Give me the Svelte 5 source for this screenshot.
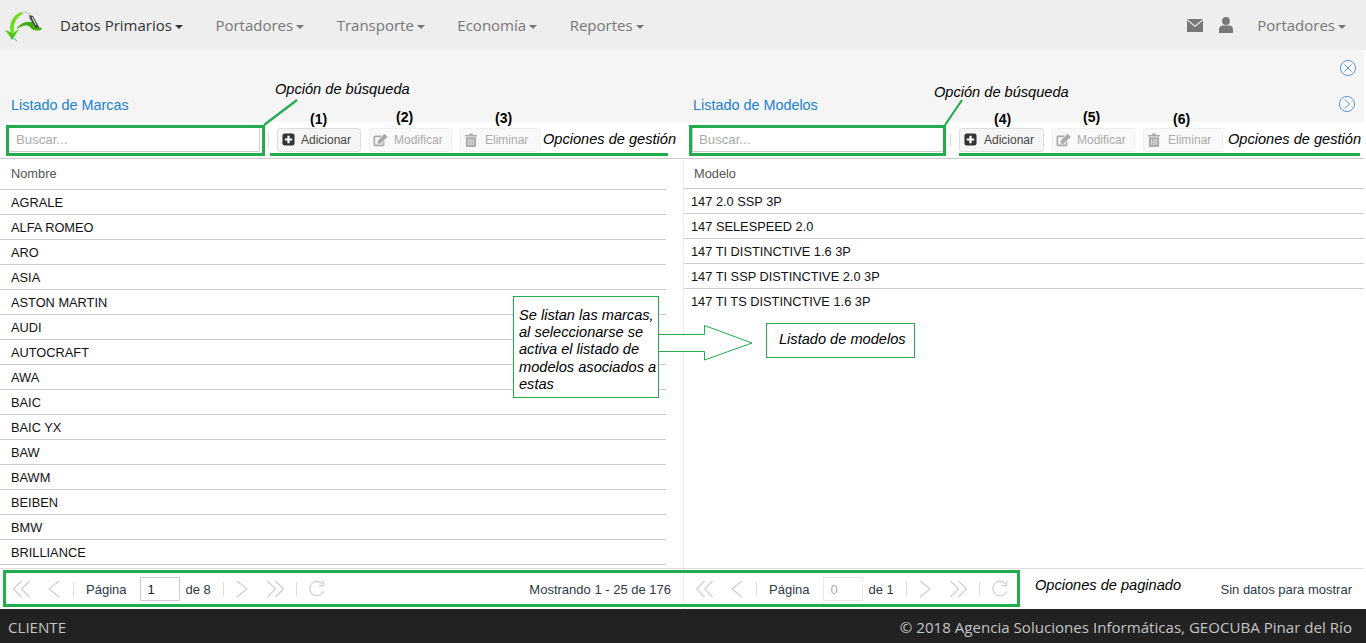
<script>
  const menus = ["Datos Primarios", "Portadores", "Transporte", "Economía", "Reportes"];
  const marcas = ["AGRALE", "ALFA ROMEO", "ARO", "ASIA", "ASTON MARTIN", "AUDI", "AUTOCRAFT", "AWA", "BAIC", "BAIC YX", "BAW", "BAWM", "BEIBEN", "BMW", "BRILLIANCE"];
  const modelos = ["147 2.0 SSP 3P", "147 SELESPEED 2.0", "147 TI DISTINCTIVE 1.6 3P", "147 TI SSP DISTINCTIVE 2.0 3P", "147 TI TS DISTINCTIVE 1.6 3P"];
</script>

{#snippet toolbar()}
  <div class="toolbar">
    <input class="search" type="text" placeholder="Buscar..." />
    <span class="tsep"></span>
    <button class="btn add">
      <svg viewBox="0 0 14 14" width="13" height="13"><rect x="0.5" y="0.5" width="13" height="13" rx="2.5" fill="#333" /><path d="M7 3v8M3 7h8" stroke="#fff" stroke-width="2.4" /></svg>
      Adicionar
    </button>
    <button class="btn mod" disabled>
      <svg viewBox="0 0 16 14" width="16" height="14"><path d="M11.5 8V11.5A1.7 1.7 0 0 1 9.8 13.2H2.2A1.7 1.7 0 0 1 .5 11.5V4.2A1.7 1.7 0 0 1 2.2 2.5H9L7.4 4.2H2.2V11.5H9.8V9.6Z" fill="#aaa" /><path d="M4.6 7.7 11.6.8 14.6 3.8 7.6 10.7H4.6Z" fill="#aaa" /></svg>
      Modificar
    </button>
    <button class="btn del" disabled>
      <svg viewBox="0 0 13 15" width="12" height="14"><path d="M0 2h4.5V.5h4V2H13v1.6H0Z" fill="#aaa" /><path d="M1 4.5h11V14a1 1 0 0 1-1 1H2a1 1 0 0 1-1-1Z" fill="#aaa" /><path d="M4 6.5v6.5M6.5 6.5v6.5M9 6.5v6.5" stroke="#f8f8f8" stroke-width="0.9" /></svg>
      Eliminar
    </button>
  </div>
{/snippet}

{#snippet pager(page, total, disabled)}
  <div class="pager-tools" class:off={disabled}>
    <svg class="pg wide" viewBox="0 0 19 18"><path d="M9.5 1 1.5 9l8 8M17.5 1l-8 8 8 8" /></svg>
    <svg class="pg narrow" viewBox="0 0 13 18"><path d="M12 1 2 9l10 8" /></svg>
    <span class="psep"></span>
    <span class="plabel">Página</span>
    <input class="pinput" type="text" value={page} {disabled} />
    <span class="plabel">de {total}</span>
    <span class="psep"></span>
    <svg class="pg narrow" viewBox="0 0 13 18"><path d="M1 1l10 8-10 8" /></svg>
    <svg class="pg wide" viewBox="0 0 19 18"><path d="M1.5 1l8 8-8 8M9.5 1l8 8-8 8" /></svg>
    <span class="psep"></span>
    <svg class="pg refresh" viewBox="0 0 18 18"><path d="M15.5 11.5A7.2 7.2 0 1 1 14.5 4" /><path d="M15.6 1v4.6H11" /></svg>
  </div>
{/snippet}

<div class="page">
  <nav class="navbar">
    <svg class="logo" viewBox="0 0 44 42" width="44" height="42">
      <path d="M9 29C6 20 11 10 20 8l1 2C14 13 11 20 12 28Z" fill="#6fdc1e" />
      <path d="M20 9c3-1 6-1 9 1" stroke="#ccc" stroke-width="1.5" fill="none" />
      <path d="M15 24c3-3 7-7 14-6 4 0 6 5 11 6l-1 2c-5 1-8 1-11-3-4-3-8-1-13 2Z" fill="#3fae12" />
      <path d="M27 11l4 1 6 11-3 1-6-9Z" fill="#444" />
      <path d="M30 13l4 8" stroke="#fff" stroke-width="1" />
      <path d="M3 26l8 3 6-4-5 8-2 3-3-5Z" fill="#4ec910" />
      <path d="M10 33l5 4" stroke="#3bb" stroke-width="1" />
    </svg>
    <ul class="menu">
      {#each menus as item, i}
        <li class:active={i === 0}>{item}<span class="caret"></span></li>
      {/each}
    </ul>
    <div class="nav-right">
      <svg viewBox="0 0 16 13" width="16" height="13"><path d="M0 0h16L8 6.5Z" fill="#777" /><path d="M0 1.6V13h16V1.6L8 8Z" fill="#777" /></svg>
      <svg class="user" viewBox="0 0 14 16" width="14" height="16"><circle cx="7" cy="4" r="3.9" fill="#777" /><path d="M0 16v-3.5C0 10 2 8.6 4 8.6h6c2 0 4 1.4 4 3.9V16Z" fill="#777" /></svg>
      <span class="nav-user">Portadores<span class="caret"></span></span>
    </div>
  </nav>

  <main class="content">
    <section class="panel left">
      <h2 class="title">Listado de Marcas</h2>
      {@render toolbar()}
      <div class="table">
        <div class="thead">Nombre</div>
        <ul class="rows">
          {#each marcas as m}<li>{m}</li>{/each}
        </ul>
      </div>
    </section>
    <section class="panel right">
      <h2 class="title">Listado de Modelos</h2>
      {@render toolbar()}
      <div class="table">
        <div class="thead">Modelo</div>
        <ul class="rows">
          {#each modelos as m}<li>{m}</li>{/each}
        </ul>
      </div>
    </section>

    <svg class="icon-close" viewBox="0 0 18 18" width="18" height="18"><circle cx="9" cy="9" r="7.6" /><path d="M5.5 5.5l7 7M12.5 5.5l-7 7" /></svg>
    <svg class="icon-next" viewBox="0 0 18 18" width="18" height="18"><circle cx="9" cy="9" r="7.6" /><path d="M7 4.5 11.5 9 7 13.5" /></svg>
  </main>

  <div class="pagers">
    <div class="pager left">
      {@render pager("1", 8, false)}
      <span class="pinfo">Mostrando 1 - 25 de 176</span>
    </div>
    <div class="pager right">
      {@render pager("0", 1, true)}
      <span class="pinfo">Sin datos para mostrar</span>
    </div>
  </div>

  <footer class="footer">
    <span>CLIENTE</span>
    <span>© 2018 Agencia Soluciones Informáticas, GEOCUBA Pinar del Río</span>
  </footer>

  <!-- anotaciones sobre la captura -->
  <div class="mark search-l"></div>
  <div class="mark search-r"></div>
  <div class="mark line-l"></div>
  <div class="mark line-r"></div>
  <div class="mark pag"></div>
  <svg class="connectors" viewBox="0 0 1366 643" width="1366" height="643">
    <path d="M264 125 297 100M945 125 962 100" stroke="#22ac4e" stroke-width="2.2" fill="none" />
    <path d="M657.5 334.5H704.5V325.5L752 343 704.5 360V351.5H657.5Z" stroke="#22ac4e" stroke-width="1" fill="#fff" />
  </svg>
  <span class="note o1">Opción de búsqueda</span>
  <span class="note o2">Opción de búsqueda</span>
  <span class="note g1">Opciones de gestión</span>
  <span class="note g2">Opciones de gestión</span>
  <span class="note pg-note">Opciones de paginado</span>
  <b class="num n1">(1)</b>
  <b class="num n2">(2)</b>
  <b class="num n3">(3)</b>
  <b class="num n4">(4)</b>
  <b class="num n5">(5)</b>
  <b class="num n6">(6)</b>
  <div class="callout">Se listan las marcas, al seleccionarse se activa el listado de modelos asociados a estas</div>
  <div class="callout2">Listado de modelos</div>
</div>

<style>
  :global(body) {
    margin: 0;
    background: #fff;
  }
  .page {
    position: relative;
    height: 643px;
    width: 1366px;
    overflow: hidden;
    display: flex;
    flex-direction: column;
    font-family: "Liberation Sans", Arial, sans-serif;
    color: #212529;
  }

  .navbar {
    height: 50px;
    flex: none;
    display: flex;
    align-items: center;
    background: #eee;
    font-family: "Open Sans", sans-serif;
    font-size: 15px;
    color: #777;
  }
  .logo {
    margin-left: 2px;
    flex: none;
  }
  .menu {
    display: flex;
    gap: 32.5px;
    list-style: none;
    margin: 0 0 0 14px;
    padding: 0;
  }
  .menu li.active {
    color: #333;
  }
  .caret {
    display: inline-block;
    margin-left: 3px;
    vertical-align: 2px;
    border-top: 4px solid currentColor;
    border-left: 4px solid transparent;
    border-right: 4px solid transparent;
  }
  .nav-right {
    margin-left: auto;
    margin-right: 20px;
    display: flex;
    align-items: center;
  }
  .user {
    margin-left: 16px;
  }
  .nav-user {
    margin-left: 24px;
  }

  .content {
    position: relative;
    flex: 1;
    display: flex;
    margin-right: 2px;
    min-height: 0;
    background: #fff;
  }
  .panel {
    display: flex;
    flex-direction: column;
    min-width: 0;
  }
  .panel.left {
    width: 683px;
    flex: none;
  }
  .panel.right {
    flex: 1;
  }
  .title {
    height: 72px;
    margin: 0;
    box-sizing: border-box;
    padding: 47px 0 0 11px;
    background: #f5f5f5;
    font-size: 14.4px;
    line-height: 17px;
    font-weight: 400;
    color: #1d7fd0;
  }
  .right .title {
    padding-left: 10px;
  }

  .toolbar {
    height: 37px;
    box-sizing: border-box;
    display: flex;
    align-items: center;
    padding: 0 0 1px 8px;
    border-bottom: 1px solid #ccc;
    background: #fff;
  }
  .right .toolbar {
    padding-left: 9px;
  }
  .search {
    width: 252px;
    height: 25px;
    box-sizing: border-box;
    padding: 0 7px;
    border: 1px solid #ccc;
    font: 13.2px "Liberation Sans", Arial, sans-serif;
    outline: none;
  }
  .right .search {
    padding-left: 6px;
  }
  .search::placeholder {
    color: #aaa;
  }
  .tsep {
    width: 1px;
    height: 14px;
    background: #ddd;
    margin: 0 8px;
  }
  .right .tsep {
    margin: 0 8px 0 6px;
  }
  .btn {
    height: 24px;
    box-sizing: border-box;
    display: flex;
    align-items: center;
    gap: 7px;
    padding: 0 0 0 4px;
    margin-right: 8px;
    background: #f5f5f5;
    border: 1px solid #ddd;
    border-radius: 3px;
    font: 12px "Liberation Sans", Arial, sans-serif;
    color: #444;
  }
  .btn:disabled {
    background: #f9f9f9;
    border-color: #eee;
    color: #aaa;
  }
  .add { width: 84px; gap: 6px; }
  .mod { width: 83px; gap: 5px; padding-left: 3px; }
  .del { width: 80px; gap: 8px; }
  .right .add { width: 85px; gap: 7px; }

  .table {
    flex: 1;
  }
  .right .table {
    border-left: 1px solid #eee;
  }
  .thead {
    height: 31px;
    box-sizing: border-box;
    padding: 6px 0 0 11px;
    border-bottom: 1px solid #ccc;
    width: 666px;
    font-size: 12.8px;
    line-height: 17px;
    color: #555;
  }
  .right .thead {
    height: 30px;
    width: auto;
    padding-left: 10px;
  }
  .rows {
    list-style: none;
    margin: 0;
    padding: 0;
  }
  .rows li {
    height: 25px;
    box-sizing: border-box;
    padding-left: 11px;
    border-bottom: 1px solid #ccc;
    font-size: 12.8px;
    line-height: 25px;
    color: #111;
  }
  .left .rows {
    width: 666px;
  }
  .right .rows li {
    padding-left: 7px;
  }
  .right .rows li:last-child {
    border-bottom: none;
  }

  .icon-close,
  .icon-next {
    position: absolute;
    fill: none;
    stroke: #5b9bd5;
    stroke-width: 1;
  }
  .icon-close {
    left: 1339px;
    top: 9px;
  }
  .icon-next {
    left: 1338px;
    top: 45px;
  }

  .pagers {
    height: 41px;
    flex: none;
    display: flex;
    box-sizing: border-box;
    margin-right: 2px;
    border-top: 1px solid #ddd;
    font-size: 13px;
    color: #2c3a47;
  }
  .pager {
    display: flex;
    align-items: center;
    justify-content: space-between;
  }
  .pager.left {
    width: 683px;
    box-sizing: border-box;
    padding: 0 12px;
    flex: none;
  }
  .pager.right {
    flex: 1;
    border-left: 1px solid #eee;
    padding: 0 12px 0 11px;
  }
  .pager-tools {
    display: flex;
    align-items: center;
  }
  .pg {
    fill: none;
    stroke: #ccc;
    stroke-width: 1.1;
    height: 18px;
    flex: none;
  }
  .wide { width: 19px; }
  .narrow { width: 13px; }
  .wide + .narrow { margin-left: 16px; }
  .narrow + .wide { margin-left: 17px; }
  .psep {
    width: 1px;
    height: 14px;
    background: #ddd;
    margin: 0 12px;
  }
  .wide + .psep { margin-left: 11px; }
  .narrow + .psep { margin-left: 13px; }
  .plabel { white-space: nowrap; }
  .pinput {
    width: 40px;
    height: 24px;
    box-sizing: border-box;
    margin: 0 5px 0 14px;
    padding: 0 6px;
    border: 1px solid #ccc;
    font: 13px "Liberation Sans", Arial, sans-serif;
    color: #222;
    outline: none;
  }
  .pinput:disabled {
    background: #fff;
    border-color: #e8e8e8;
    color: #aaa;
  }
  .refresh {
    width: 18px;
    margin-left: -1px;
  }

  .footer {
    height: 34px;
    flex: none;
    display: flex;
    align-items: center;
    justify-content: space-between;
    padding: 2px 14px 0 8px;
    box-sizing: border-box;
    background: #222;
    font-family: "Open Sans", sans-serif;
    font-size: 15.1px;
    color: #c4c4c4;
  }

  .mark {
    position: absolute;
    box-sizing: border-box;
    border: 3px solid #22ac4e;
  }
  .search-l { left: 6px; top: 125px; width: 259px; height: 31px; }
  .search-r { left: 689px; top: 125px; width: 257px; height: 31px; }
  .line-l { left: 270px; top: 153px; width: 398px; height: 3px; border-width: 3px 0 0; }
  .line-r { left: 959px; top: 153px; width: 401px; height: 3px; border-width: 3px 0 0; }
  .pag { left: 3px; top: 570px; width: 1017px; height: 37px; }
  .connectors {
    position: absolute;
    left: 0;
    top: 0;
  }
  .note {
    position: absolute;
    font-size: 14.6px;
    font-style: italic;
    line-height: 17px;
    color: #000;
    white-space: nowrap;
  }
  .o1 { left: 275px; top: 81px; }
  .o2 { left: 934px; top: 84px; }
  .g1 { left: 543px; top: 131px; }
  .g2 { left: 1228px; top: 131px; }
  .pg-note { left: 1035px; top: 577px; }
  .num {
    position: absolute;
    font-size: 14px;
    line-height: 16px;
    color: #000;
  }
  .n1 { left: 310px; top: 111px; }
  .n2 { left: 396px; top: 109px; }
  .n3 { left: 495px; top: 110px; }
  .n4 { left: 994px; top: 111px; }
  .n5 { left: 1083px; top: 109px; }
  .n6 { left: 1173px; top: 111px; }
  .callout {
    position: absolute;
    left: 513px;
    top: 296px;
    width: 146px;
    height: 102px;
    box-sizing: border-box;
    padding: 10px 0 0 5px;
    border: 1px solid #22ac4e;
    background: #fff;
    font-size: 14.6px;
    font-style: italic;
    line-height: 17.2px;
    color: #000;
  }
  .callout2 {
    position: absolute;
    left: 766px;
    top: 323px;
    width: 149px;
    height: 35px;
    box-sizing: border-box;
    padding: 7px 0 0 12px;
    border: 1px solid #22ac4e;
    background: #fff;
    font-size: 14.6px;
    font-style: italic;
    line-height: 17px;
    color: #000;
  }
</style>
